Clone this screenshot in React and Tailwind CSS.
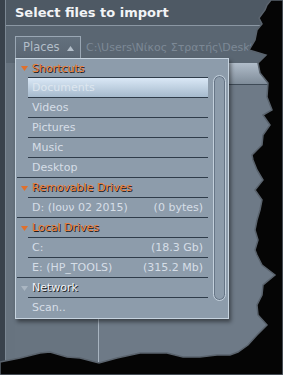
import React from 'react';

const rows = [
  { type: 'head', label: 'Shortcuts', color: 'orange' },
  { label: 'Documents', active: true },
  { label: 'Videos' },
  { label: 'Pictures' },
  { label: 'Music' },
  { label: 'Desktop' },
  { type: 'head', label: 'Removable Drives', color: 'orange' },
  { label: 'D: (Ιουν 02 2015)', size: '(0 bytes)' },
  { type: 'head', label: 'Local Drives', color: 'orange' },
  { label: 'C:', size: '(18.3 Gb)' },
  { label: 'E: (HP_TOOLS)', size: '(315.2 Mb)' },
  { type: 'head', label: 'Network', color: 'grey' },
  { label: 'Scan..' },
];

const Tri = ({ color }) => (
  <svg width="7" height="5" viewBox="0 0 7 5">
    <path d="M0 0 H7 L3.5 5 Z" fill={color} />
  </svg>
);

const Row = ({ row, first, next }) => {
  const head = row.type === 'head';
  const fullLine = next && next.type === 'head';
  return (
    <div className="flex flex-col">
      <div className={`flex ${first ? 'h-[18px]' : 'h-[19px]'}`}>
        <div className="w-[12px] flex items-center pl-[5px] pt-[1px]">
          {head && <Tri color={row.color === 'orange' ? '#e0702c' : '#aab6c2'} />}
        </div>
        <div
          className={`flex-1 flex items-center justify-between pl-[4px] pr-[5px] pt-[2px] ${
            row.active ? 'bg-gradient-to-b from-[#dae8f6] to-[#a6bacd]' : ''
          }`}
        >
          {head ? (
            <span
              className={
                row.color === 'orange'
                  ? 'text-[#ee7c36] [text-shadow:1px_1px_0_#1d1d1d]'
                  : 'text-[#eef2f6] [text-shadow:1px_1px_0_#1d1d1d]'
              }
            >
              {row.label}
            </span>
          ) : (
            <span className={row.active ? 'text-[#dde6ef]' : 'text-[#d6dee7]'}>{row.label}</span>
          )}
          {row.size && <span className="text-[#d6dee7]">{row.size}</span>}
        </div>
      </div>
      {next && <div className={`h-px bg-[#2f3c4a] ${fullLine ? 'ml-[1px]' : 'ml-[12px]'}`} />}
    </div>
  );
};

export default function App() {
  return (
    <div
      className="relative w-[283px] h-[375px] overflow-hidden bg-black"
      style={{ fontFamily: '"DejaVu Sans", Verdana, sans-serif' }}
    >
      <div className="flex flex-col h-full border-l-[5px] border-[#39424c] bg-[#5a6672]">
        <div className="flex flex-col h-full border-l border-[#7b8793]">
          {/* title */}
          <div className="h-[26px] shrink-0 flex items-center pl-[9px] pt-[1px] bg-[#4e5964] border-b border-[#8b97a3]">
            <span className="text-[13px] font-bold text-[#f2f4f6]">Select files to import</span>
          </div>

          {/* toolbar */}
          <div className="h-[37px] shrink-0 flex items-start pt-[10px] pl-[9px]">
            <div className="w-[66px] h-[22px] flex items-center pl-[7px] pt-[1px] gap-[7px] border border-b-0 border-[#9aa7b4] bg-gradient-to-b from-[#63707d] to-[#5a6673]">
              <span className="text-[11.5px] text-[#b3bec9]">Places</span>
              <svg width="7" height="5" viewBox="0 0 7 5">
                <path d="M0 5 H7 L3.5 0 Z" fill="#b3bec9" />
              </svg>
            </div>
            <span className="ml-[5px] mt-[4px] text-[11px] text-[#7d8996] whitespace-nowrap">
              C:\Users\Νίκος Στρατής\Desktop
            </span>
          </div>

          {/* file list behind */}
          <div className="flex-1 flex">
            <div className="w-[9px] bg-[#67737f]" />
            <div className="flex-1 flex flex-col">
              <div className="h-[22px] bg-gradient-to-b from-[#b1bdca] to-[#7f8c99] border-b border-[#3e4a56]" />
              <div className="flex-1 flex">
                <div className="w-[84px] bg-[#687480] border-r border-[#a8b4c0]" />
                <div className="flex-1 bg-[#6e7a87]" />
              </div>
            </div>
          </div>
        </div>
      </div>

      {/* dropdown */}
      <div className="absolute left-[15px] top-[58px] w-[214px] h-[261px] flex bg-[#8d9cab] border border-[#c6d3df] shadow-[2px_3px_4px_rgba(0,0,0,0.45)] text-[11px]">
        <div className="w-[192px] flex flex-col">
          {rows.map((r, i) => (
            <Row key={i} row={r} first={i === 0} next={rows[i + 1]} />
          ))}
        </div>
        <div className="ml-[5px] w-[13px] pt-[16px] pb-[17px]">
          <div className="h-full rounded-full border border-[#c3d0dc] shadow-[inset_0_0_0_1px_#667586]" />
        </div>
      </div>

      {/* torn edge */}
      <svg className="absolute inset-0" width="283" height="375" viewBox="0 0 283 375">
        <path
          d="M271 0 L267 5 L265 10 L259 18 L262 24 L257 30 L255 40 L249 50 L266 55 L258 63 L260 73 L268 83 L267 97 L272 110 L263 115 L270 125 L263 135 L262 145 L252 155 L253 160 L257 170 L263 180 L255 190 L262 200 L260 210 L257 220 L255 230 L258 240 L255 250 L257 255 L262 265 L275 275 L263 285 L262 295 L257 305 L258 315 L267 325 L257 335 L248 345 L238 352 L230 355 L217 355 L200 357 L183 357 L167 353 L140 353 L117 358 L99 363 L80 358 L67 357 L50 352 L40 353 L20 358 L0 362 L0 375 L283 375 L283 0 Z"
          fill="#050505"
          stroke="#5a636d"
          strokeWidth="1.5"
        />
      </svg>
    </div>
  );
}
